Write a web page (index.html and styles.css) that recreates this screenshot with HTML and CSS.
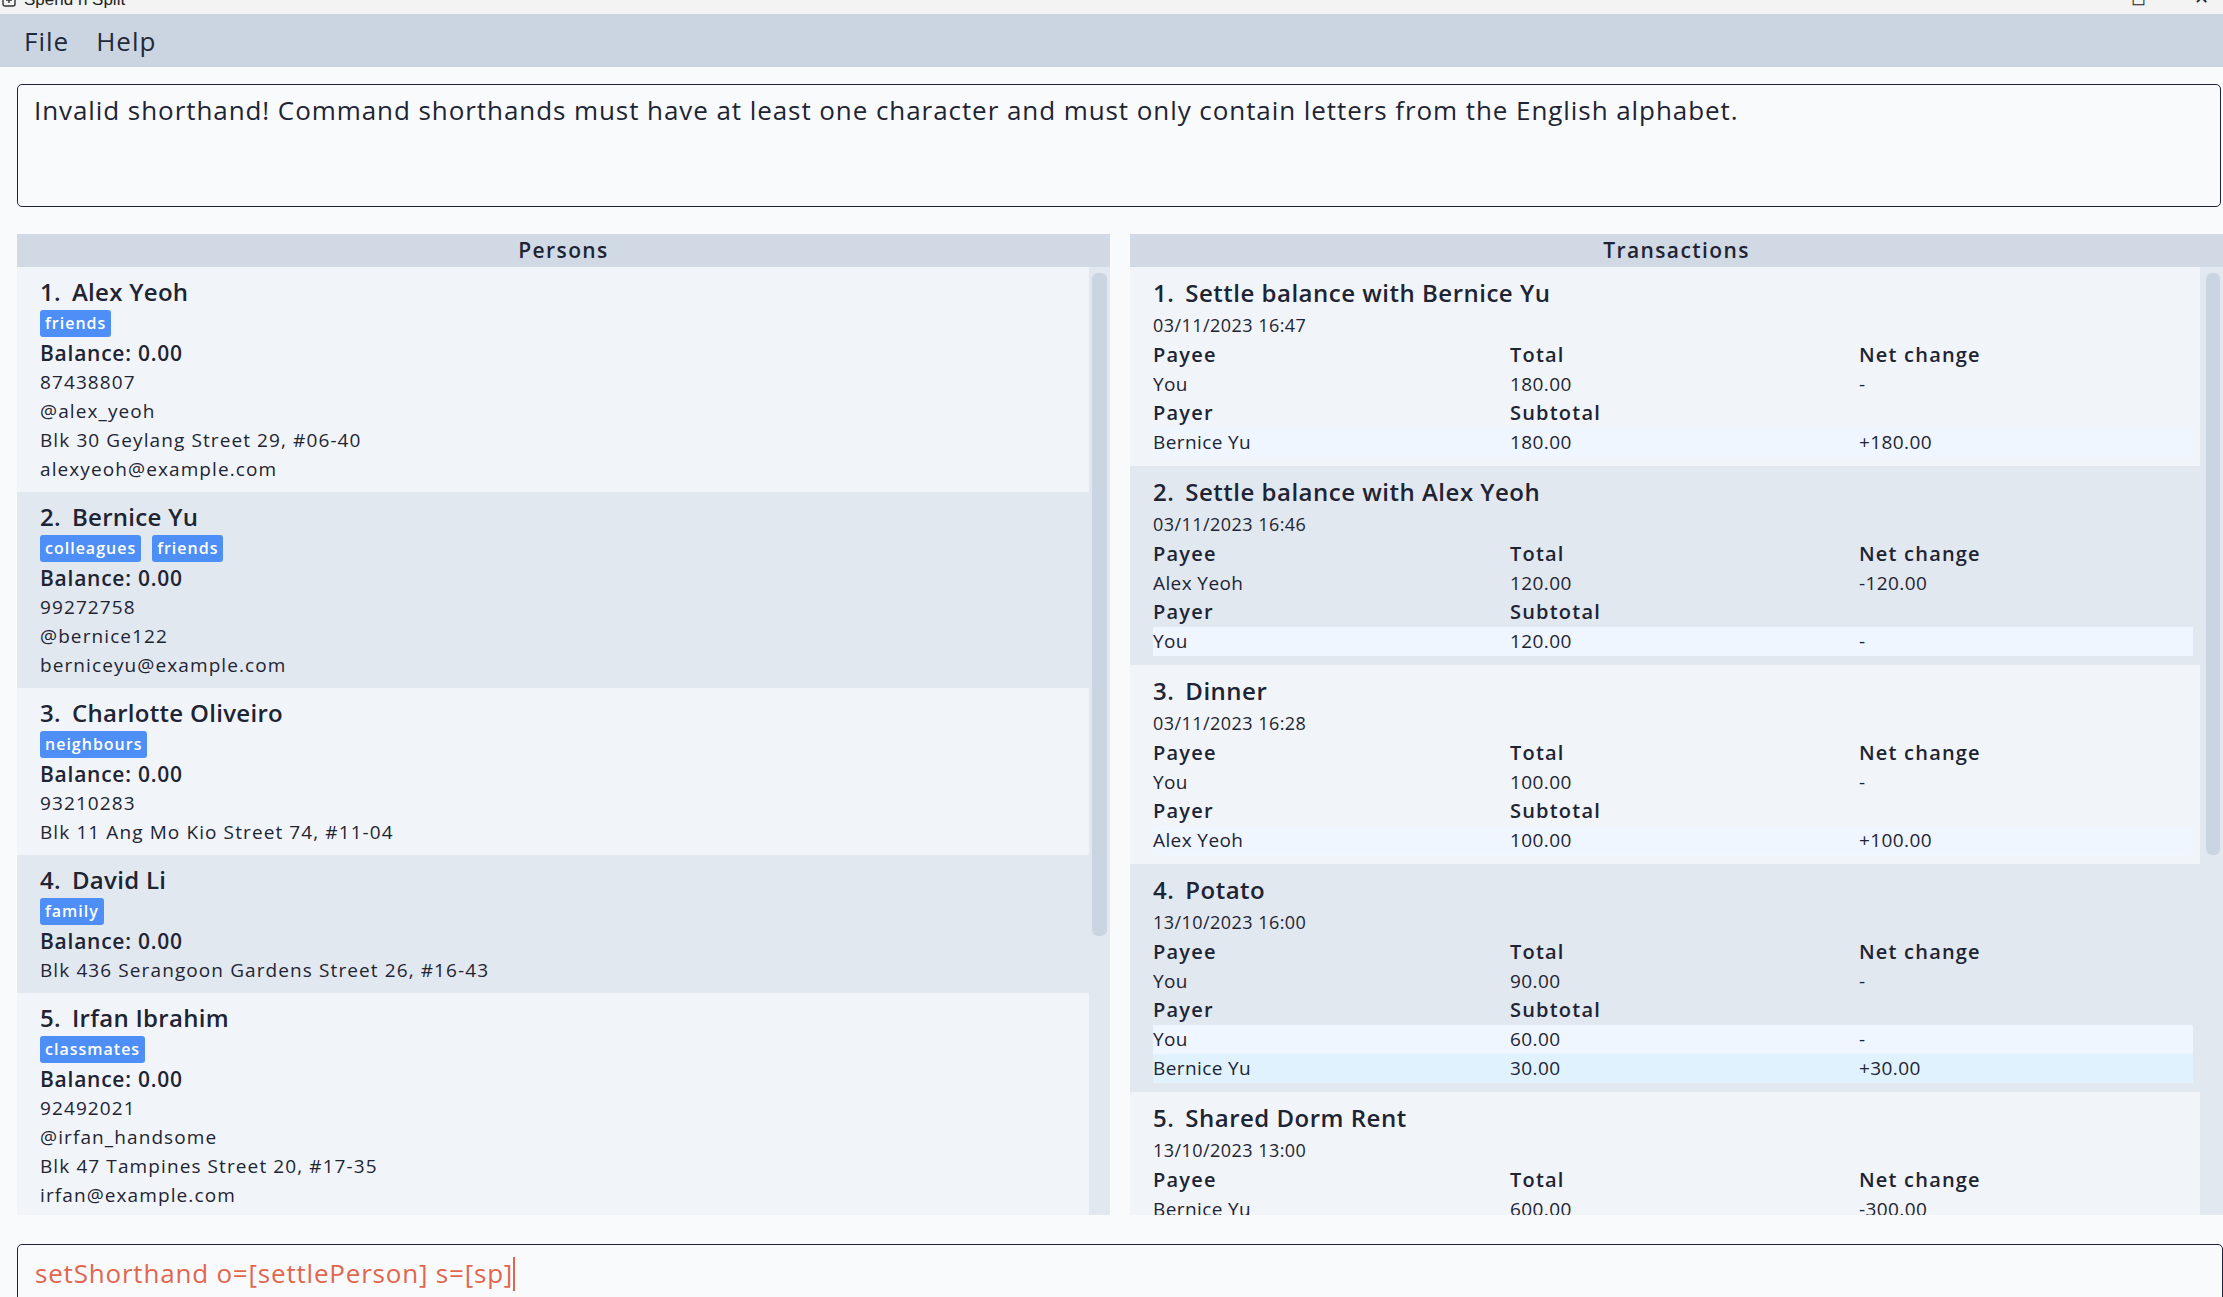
FILE: index.html
```html
<!DOCTYPE html>
<html lang="en">
<head>
<meta charset="utf-8">
<title>Spend n Split</title>
<link rel="stylesheet" href="styles.css">
</head>
<body>
<div class="titlebar">
  <div class="title-left">
    <svg class="app-icon" width="14" height="14" viewBox="0 0 14 14"><rect x="1" y="1" width="12" height="12" rx="2" fill="none" stroke="#333" stroke-width="1.4"/><path d="M4 7h6M7 4v6" stroke="#333" stroke-width="1.4"/></svg>
    <span class="title-text">Spend n Split</span>
  </div>
  <div class="win-controls">
    <span class="win-btn">&#9723;</span>
    <span class="win-btn">&#10005;</span>
  </div>
</div>
<div class="menubar">
  <span class="menu-item">File</span>
  <span class="menu-item">Help</span>
</div>
<main class="content">
  <div class="result-box">Invalid shorthand! Command shorthands must have at least one character and must only contain letters from the English alphabet.</div>
  <div class="panels">
    <section class="panel">
      <div class="panel-header">Persons</div>
      <div class="panel-body">
        <div class="list">
          <div class="card">
            <div class="name"><span class="idx">1.</span>Alex Yeoh</div>
            <div class="tags"><span class="tag">friends</span></div>
            <div class="balance">Balance: 0.00</div>
            <div class="line">87438807</div>
            <div class="line">@alex_yeoh</div>
            <div class="line">Blk 30 Geylang Street 29, #06-40</div>
            <div class="line">alexyeoh@example.com</div>
          </div>
          <div class="card alt">
            <div class="name"><span class="idx">2.</span>Bernice Yu</div>
            <div class="tags"><span class="tag">colleagues</span><span class="tag">friends</span></div>
            <div class="balance">Balance: 0.00</div>
            <div class="line">99272758</div>
            <div class="line">@bernice122</div>
            <div class="line">berniceyu@example.com</div>
          </div>
          <div class="card">
            <div class="name"><span class="idx">3.</span>Charlotte Oliveiro</div>
            <div class="tags"><span class="tag">neighbours</span></div>
            <div class="balance">Balance: 0.00</div>
            <div class="line">93210283</div>
            <div class="line">Blk 11 Ang Mo Kio Street 74, #11-04</div>
          </div>
          <div class="card alt">
            <div class="name"><span class="idx">4.</span>David Li</div>
            <div class="tags"><span class="tag">family</span></div>
            <div class="balance">Balance: 0.00</div>
            <div class="line">Blk 436 Serangoon Gardens Street 26, #16-43</div>
          </div>
          <div class="card">
            <div class="name"><span class="idx">5.</span>Irfan Ibrahim</div>
            <div class="tags"><span class="tag">classmates</span></div>
            <div class="balance">Balance: 0.00</div>
            <div class="line">92492021</div>
            <div class="line">@irfan_handsome</div>
            <div class="line">Blk 47 Tampines Street 20, #17-35</div>
            <div class="line">irfan@example.com</div>
          </div>
        </div>
        <div class="scrolltrack"><div class="thumb thumb-persons"></div></div>
      </div>
    </section>
    <section class="panel">
      <div class="panel-header">Transactions</div>
      <div class="panel-body">
        <div class="list">
          <div class="card tcard">
            <div class="name"><span class="idx">1.</span>Settle balance with Bernice Yu</div>
            <div class="date">03/11/2023 16:47</div>
            <div class="grid head"><span>Payee</span><span>Total</span><span>Net change</span></div>
            <div class="grid val"><span>You</span><span>180.00</span><span>-</span></div>
            <div class="grid head"><span>Payer</span><span>Subtotal</span><span></span></div>
            <div class="grid prow"><span>Bernice Yu</span><span>180.00</span><span>+180.00</span></div>
          </div>
          <div class="card tcard alt">
            <div class="name"><span class="idx">2.</span>Settle balance with Alex Yeoh</div>
            <div class="date">03/11/2023 16:46</div>
            <div class="grid head"><span>Payee</span><span>Total</span><span>Net change</span></div>
            <div class="grid val"><span>Alex Yeoh</span><span>120.00</span><span>-120.00</span></div>
            <div class="grid head"><span>Payer</span><span>Subtotal</span><span></span></div>
            <div class="grid prow"><span>You</span><span>120.00</span><span>-</span></div>
          </div>
          <div class="card tcard">
            <div class="name"><span class="idx">3.</span>Dinner</div>
            <div class="date">03/11/2023 16:28</div>
            <div class="grid head"><span>Payee</span><span>Total</span><span>Net change</span></div>
            <div class="grid val"><span>You</span><span>100.00</span><span>-</span></div>
            <div class="grid head"><span>Payer</span><span>Subtotal</span><span></span></div>
            <div class="grid prow"><span>Alex Yeoh</span><span>100.00</span><span>+100.00</span></div>
          </div>
          <div class="card tcard alt">
            <div class="name"><span class="idx">4.</span>Potato</div>
            <div class="date">13/10/2023 16:00</div>
            <div class="grid head"><span>Payee</span><span>Total</span><span>Net change</span></div>
            <div class="grid val"><span>You</span><span>90.00</span><span>-</span></div>
            <div class="grid head"><span>Payer</span><span>Subtotal</span><span></span></div>
            <div class="grid prow"><span>You</span><span>60.00</span><span>-</span></div>
            <div class="grid prow prow2"><span>Bernice Yu</span><span>30.00</span><span>+30.00</span></div>
          </div>
          <div class="card tcard">
            <div class="name"><span class="idx">5.</span>Shared Dorm Rent</div>
            <div class="date">13/10/2023 13:00</div>
            <div class="grid head"><span>Payee</span><span>Total</span><span>Net change</span></div>
            <div class="grid val"><span>Bernice Yu</span><span>600.00</span><span>-300.00</span></div>
            <div class="grid head"><span>Payer</span><span>Subtotal</span><span></span></div>
          </div>
        </div>
        <div class="scrolltrack wide"><div class="thumb thumb-trans"></div></div>
      </div>
    </section>
  </div>
  <div class="command-box"><span class="cmd-text">setShorthand o=[settlePerson] s=[sp]</span><span class="caret"></span></div>
</main>
</body>
</html>
```
FILE: styles.css
```css
* { box-sizing: border-box; }
html, body { margin: 0; padding: 0; }
body {
  width: 2223px;
  height: 1297px;
  overflow: hidden;
  background: #f8fafc;
  color: #1e2433;
  font-family: "Open Sans", "DejaVu Sans", sans-serif;
}
.titlebar {
  height: 14px;
  background: #f3f3f3;
  display: flex;
  justify-content: space-between;
  overflow: hidden;
  font-family: "Liberation Sans", sans-serif;
  font-size: 17px;
  color: #222;
}
.title-left { display: flex; align-items: center; gap: 8px; margin-top: -14px; padding-left: 2px; }
.title-text { line-height: 20px; }
.win-controls { display: flex; gap: 48px; margin-top: -12px; padding-right: 14px; }
.win-btn { font-size: 18px; line-height: 20px; }
.menubar {
  height: 53px;
  background: #cbd5e1;
  display: flex;
  align-items: center;
  padding-left: 24px;
  gap: 27px;
}
.menu-item { font-size: 26px; color: #1e293b; letter-spacing: 1px; }
.content { padding: 17px 0 0 17px; }
.result-box {
  height: 123px;
  border: 1.5px solid #1e2433;
  border-radius: 5px;
  margin-right: 2px;
  padding: 7px 16px;
  font-size: 26px;
  line-height: 36px;
  letter-spacing: 0.93px;
  background: #f8fafc;
}
.panels {
  margin-top: 27px;
  height: 981px;
  display: grid;
  grid-template-columns: 1093px 1093px;
  column-gap: 20px;
}
.panel { display: flex; flex-direction: column; overflow: hidden; }
.panel-header {
  height: 33px;
  background: #d1d9e5;
  text-align: center;
  font-weight: 600;
  font-size: 21px;
  line-height: 33px;
  letter-spacing: 1.4px;
}
.panel-body { flex: 1; display: flex; overflow: hidden; background: #e2e8f0; }
.list { flex: 1; overflow: hidden; }
.scrolltrack { width: 21px; padding: 6px 3px 0 3px; background: #e2e8f0; }
.scrolltrack.wide { width: 23px; padding: 6px 3px 0 6px; }
.thumb { background: #cbd5e1; border-radius: 6px; }
.thumb-persons { height: 663px; }
.thumb-trans { height: 582px; }
.card { background: #f1f5f9; padding: 8px 7px 8px 23px; }
.card.alt { background: #e2e8f0; }
.name { font-size: 24px; font-weight: 600; line-height: 34px; letter-spacing: 0.3px; }
.idx { display: inline-block; margin-right: 11px; }
.tags { display: flex; gap: 11px; margin: 1px 0 2px; height: 27px; }
.tag {
  background: #4e8ef7;
  color: #fff;
  font-size: 16px;
  font-weight: 600;
  line-height: 27px;
  padding: 0 5px;
  border-radius: 3px;
  letter-spacing: 1px;
}
.balance { font-size: 21px; font-weight: 600; line-height: 29px; letter-spacing: 0.75px; }
.line { font-size: 19px; line-height: 29px; letter-spacing: 1.1px; }
.tcard { padding-top: 9px; padding-bottom: 9px; }
.tcard .name { letter-spacing: 0.5px; }
.date { font-size: 18px; line-height: 30px; letter-spacing: 0.45px; }
.grid { display: grid; grid-template-columns: 357px 349px 1fr; }
.grid.head { font-size: 20px; font-weight: 600; line-height: 30px; letter-spacing: 1.2px; }
.grid.val { font-size: 19px; line-height: 28px; letter-spacing: 0.4px; }
.grid.prow { font-size: 19px; line-height: 29px; letter-spacing: 0.4px; background: #eff6ff; }
.grid.prow2 { background: #e0f2fe; }
.command-box {
  margin-top: 29px;
  height: 80px;
  border: 1.5px solid #1e2433;
  border-radius: 5px;
  padding: 10px 17px;
  font-size: 26px;
  line-height: 36px;
  letter-spacing: 0.8px;
  color: #e0674e;
  display: flex;
  align-items: flex-start;
  background: #f8fafc;
}
.caret { display: inline-block; width: 2px; height: 34px; background: #e0674e; margin-top: 2px; }
```
